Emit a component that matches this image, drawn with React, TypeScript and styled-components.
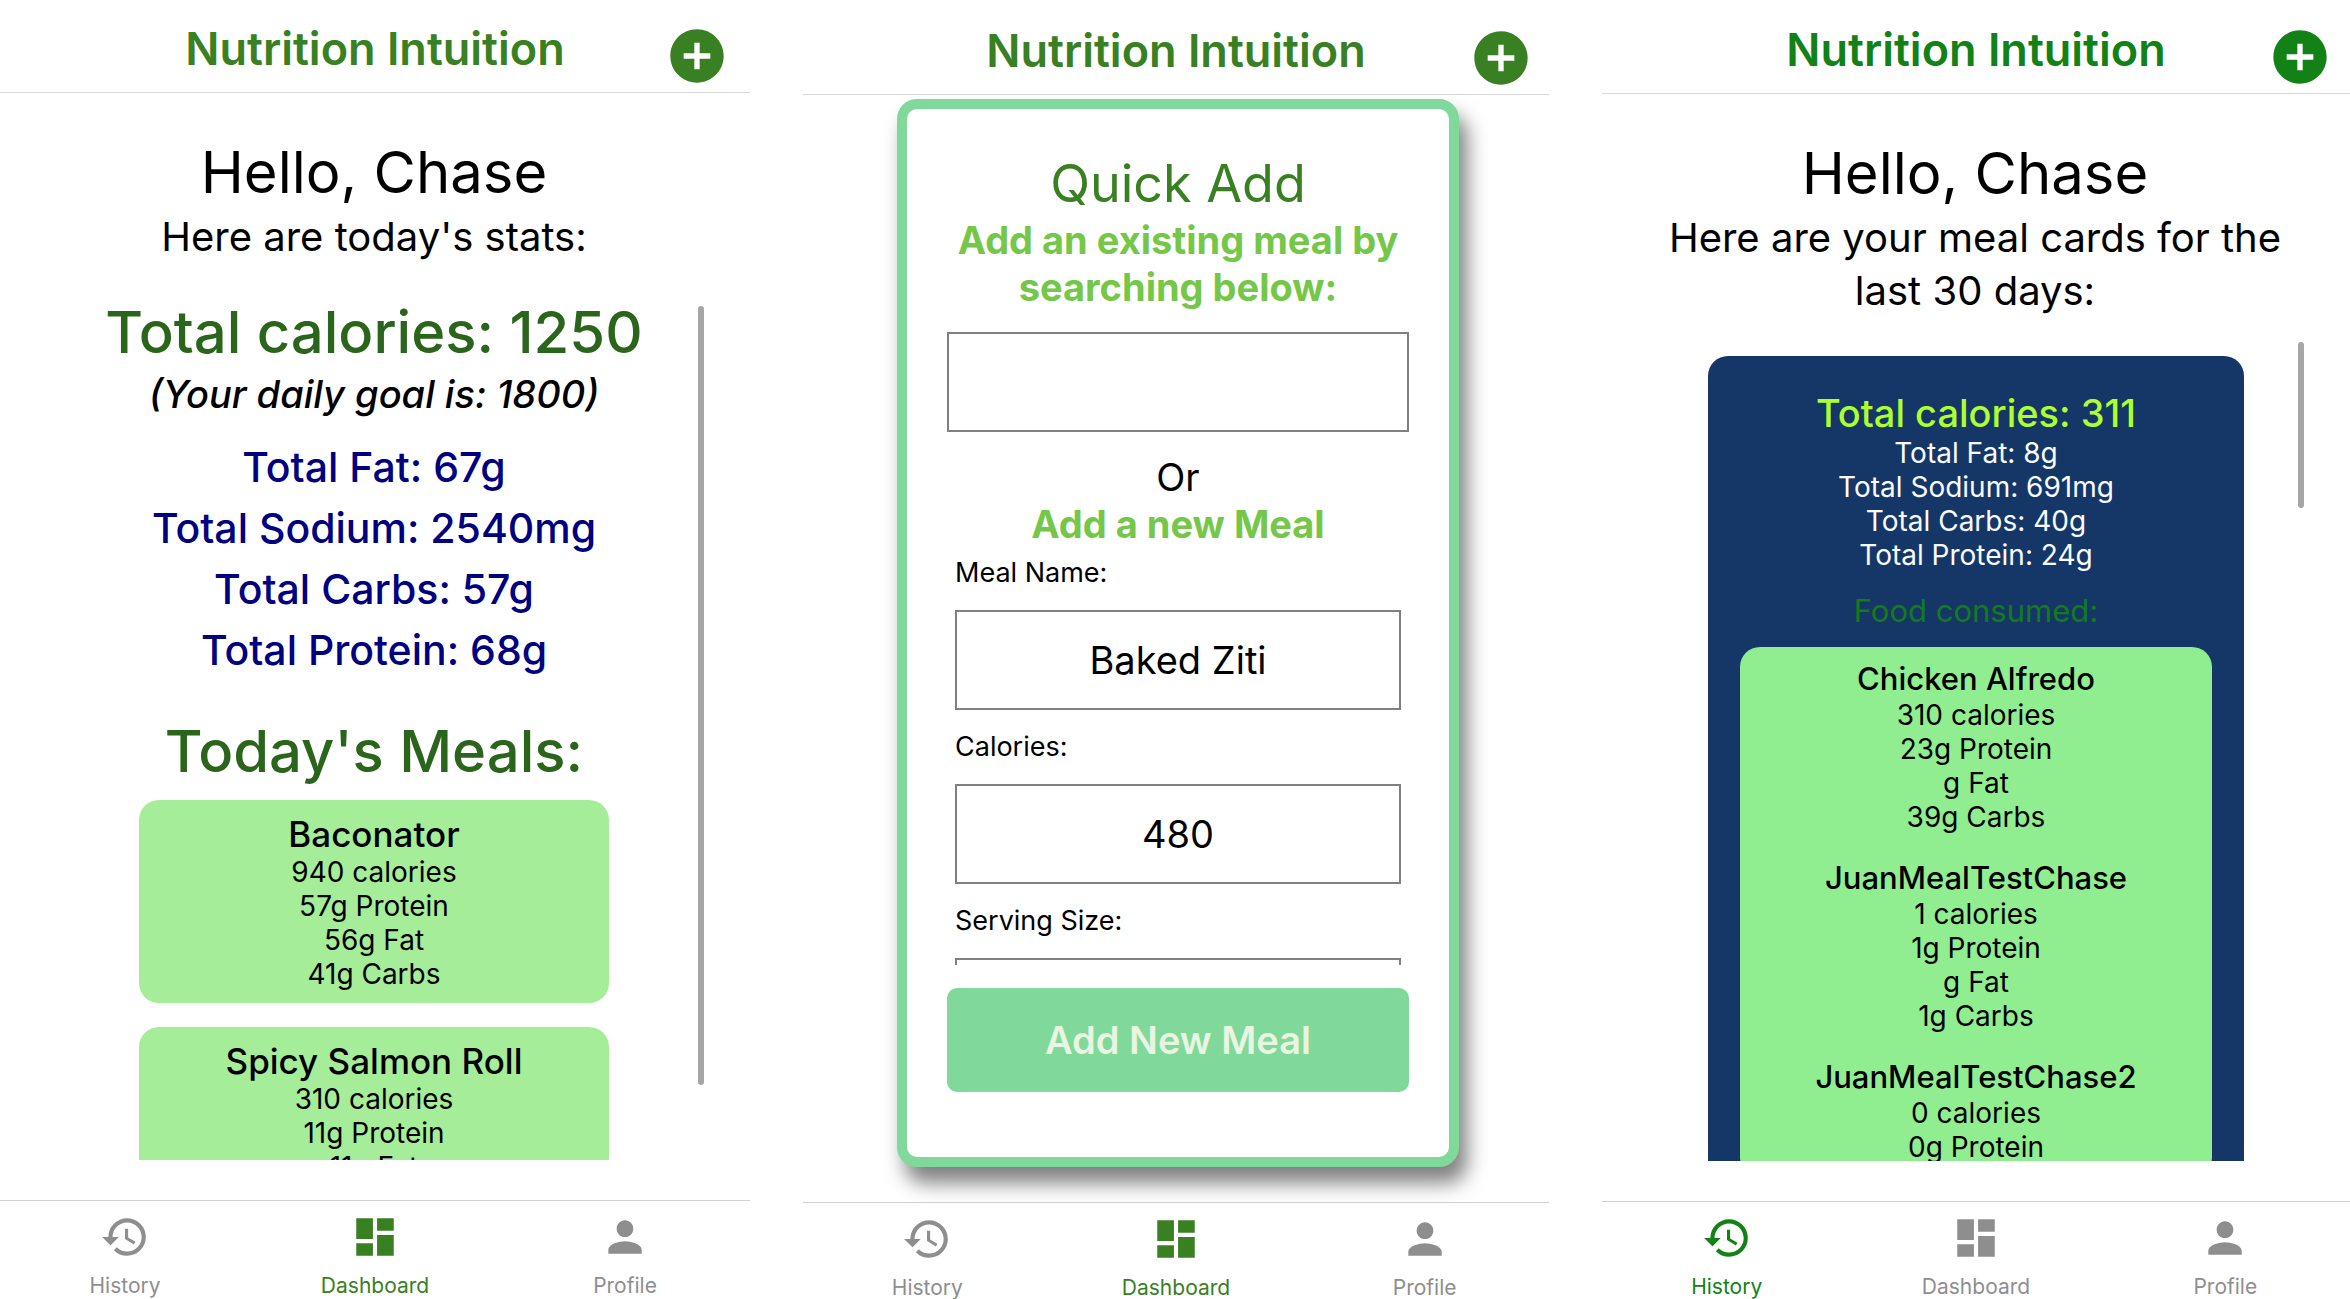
import React from 'react';
import styled, { createGlobalStyle } from 'styled-components';
import { MdAddCircle, MdDashboard, MdHistory, MdPerson } from 'react-icons/md';

const GlobalStyle = createGlobalStyle`
  *, *::before, *::after { box-sizing: border-box; }
  body {
    margin: 0;
    background: #fff;
    color: #000;
    font-family: Inter, "Liberation Sans", sans-serif;
  }
  h1, h2, h3, p, ul { margin: 0; padding: 0; font-weight: 400; }
  ul { list-style: none; }
`;

const Page = styled.div`
  display: grid;
  grid-template-columns: 750fr 746fr 748fr;
  grid-template-rows: minmax(0, 1fr);
  column-gap: 53px;
  height: 100vh;
  padding-bottom: 4px;
`;

const Screen = styled.section<{ $shift: number; $accent: string }>`
  display: flex;
  flex-direction: column;
  min-width: 0;
  min-height: 0;
  padding-top: ${(p) => p.$shift}px;
  --accent: ${(p) => p.$accent};
`;

const Header = styled.header<{ $edge: number }>`
  flex: none;
  display: grid;
  grid-template-columns: 1fr auto 1fr;
  align-items: start;
  height: 93px;
  padding-top: 24px;
  border-bottom: 1px solid #d8d8d8;

  h1 {
    grid-column: 2;
    font-size: 45px;
    line-height: 49px;
    font-weight: 600;
    color: var(--accent);
  }

  button {
    justify-self: end;
    margin-right: ${(p) => p.$edge}px;
  }
`;

const AddButton = styled.button`
  display: flex;
  padding: 0;
  border: 0;
  background: none;
  color: var(--accent);
  font-size: 64px;
  cursor: pointer;
`;

const Body = styled.main`
  flex: 1;
  display: flex;
  flex-direction: column;
  min-height: 0;
  padding: 41px 46px 40px 44px;
  text-align: center;
`;

const Greeting = styled.h2`
  font-size: 58px;
  line-height: 76px;
`;

const Intro = styled.p`
  font-size: 40px;
  line-height: 53px;
`;

const ScrollFrame = styled.div<{ $gap: number }>`
  position: relative;
  flex: 1;
  min-height: 0;
  margin-top: ${(p) => p.$gap}px;
`;

const Scroller = styled.div`
  height: 100%;
  overflow-y: auto;
  scrollbar-width: none;
`;

const Thumb = styled.div<{ $percent: number }>`
  position: absolute;
  top: 12px;
  right: 0;
  width: 6px;
  height: ${(p) => p.$percent}%;
  border-radius: 3px;
  background: #a6a6a6;
`;

const SectionTitle = styled.h3`
  font-size: 58px;
  line-height: 76px;
  font-weight: 500;
  color: #2b651b;
`;

const Goal = styled.p`
  font-size: 38px;
  line-height: 48px;
  font-weight: 500;
  font-style: italic;
`;

const Totals = styled.ul`
  margin: 19px 0 32px;
  font-size: 41px;
  line-height: 61px;
  font-weight: 500;
  color: #000080;
`;

const MealList = styled.div`
  display: flex;
  flex-direction: column;
  gap: 24px;
  margin: 11px 95px 0;
`;

const MealCard = styled.article`
  padding: 13px 16px 12px;
  border-radius: 20px;
  background: #a6ed9a;
`;

const MealName = styled.h3<{ $small?: boolean }>`
  font-size: ${(p) => (p.$small ? 31 : 35)}px;
  line-height: ${(p) => (p.$small ? 38 : 42)}px;
  font-weight: 500;
`;

const Facts = styled.ul`
  font-size: 28px;
  line-height: 34px;
`;

const DayCard = styled.article`
  margin: 26px 60px 0 62px;
  padding: 34px 32px;
  border-radius: 20px;
  background: #153768;
  color: #f8fbff;
`;

const DayTotal = styled.h3`
  font-size: 38px;
  line-height: 46px;
  font-weight: 500;
  color: #adff2f;
`;

const FoodTitle = styled.h3`
  margin: 20px 0 17px;
  font-size: 31px;
  line-height: 38px;
  color: #147a1c;
`;

const FoodCard = styled.div`
  display: flex;
  flex-direction: column;
  gap: 25px;
  padding: 13px 16px;
  border-radius: 20px;
  background: #90ee90;
  color: #000;
`;

const Modal = styled.form`
  flex: 1;
  display: flex;
  flex-direction: column;
  min-height: 0;
  margin: 4px 90px 35px 94px;
  padding: 42px 40px 65px;
  border: 10px solid #81d89b;
  border-radius: 20px;
  background: #fff;
  box-shadow: 8px 16px 20px rgba(0, 0, 0, 0.5);
  text-align: center;
`;

const ModalTitle = styled.h2`
  font-size: 52px;
  line-height: 66px;
  color: var(--accent);
`;

const ModalText = styled.p<{ $strong?: boolean }>`
  font-size: 38px;
  line-height: 47px;
  font-weight: ${(p) => (p.$strong ? 700 : 400)};
  color: ${(p) => (p.$strong ? '#74c748' : '#000')};
`;

const TextInput = styled.input`
  flex: none;
  width: 100%;
  height: 100px;
  border: 2px solid #808080;
  border-radius: 0;
  background: #fff;
  color: #000;
  font: 400 38px/46px Inter, "Liberation Sans", sans-serif;
  text-align: center;
`;

const SearchInput = styled(TextInput)`
  margin: 21px 0 22px;
`;

const Fields = styled.div`
  flex: 1;
  display: flex;
  flex-direction: column;
  gap: 20px;
  min-height: 0;
  margin: 8px 8px 23px;
  overflow-y: auto;
  scrollbar-width: none;
`;

const Field = styled.label`
  flex: none;
  display: flex;
  flex-direction: column;
  gap: 20px;
  font-size: 27px;
  line-height: 34px;
  text-align: left;
`;

const SubmitButton = styled.button`
  flex: none;
  height: 104px;
  border: 0;
  border-radius: 10px;
  background: #81d89b;
  color: #e8f5e0;
  font: 600 38px/46px Inter, "Liberation Sans", sans-serif;
  cursor: pointer;
`;

const TabBar = styled.nav<{ $shift: number }>`
  flex: none;
  display: grid;
  grid-template-columns: repeat(3, 1fr);
  height: ${(p) => 95 - p.$shift}px;
  padding-top: 11px;
  border-top: 1px solid #d0d0d0;
`;

const Tab = styled.a<{ $active: boolean }>`
  display: flex;
  flex-direction: column;
  align-items: center;
  gap: 13px;
  color: ${(p) => (p.$active ? 'var(--accent)' : '#8e8e8f')};
  font-size: 21px;
  line-height: 22px;
  text-decoration: none;

  svg { flex: none; font-size: 50px; }
`;

const tabs = [
  { name: 'History', Icon: MdHistory },
  { name: 'Dashboard', Icon: MdDashboard },
  { name: 'Profile', Icon: MdPerson },
];

type PhoneProps = {
  shift: number;
  edge: number;
  accent: string;
  active: string;
  children: React.ReactNode;
};

function Phone({ shift, edge, accent, active, children }: PhoneProps) {
  return (
    <Screen $shift={shift} $accent={accent}>
      <Header $edge={edge}>
        <h1>Nutrition Intuition</h1>
        <AddButton type="button" aria-label="Add meal">
          <MdAddCircle />
        </AddButton>
      </Header>
      {children}
      <TabBar $shift={shift}>
        {tabs.map(({ name, Icon }) => (
          <Tab key={name} href={`#${name.toLowerCase()}`} $active={name === active}>
            <Icon />
            <span>{name}</span>
          </Tab>
        ))}
      </TabBar>
    </Screen>
  );
}

type Meal = { name: string; facts: string[] };

const todaysTotals = ['Total Fat: 67g', 'Total Sodium: 2540mg', 'Total Carbs: 57g', 'Total Protein: 68g'];

const todaysMeals: Meal[] = [
  { name: 'Baconator', facts: ['940 calories', '57g Protein', '56g Fat', '41g Carbs'] },
  { name: 'Spicy Salmon Roll', facts: ['310 calories', '11g Protein', '11g Fat'] },
];

const dayTotals = ['Total Fat: 8g', 'Total Sodium: 691mg', 'Total Carbs: 40g', 'Total Protein: 24g'];

const dayMeals: Meal[] = [
  { name: 'Chicken Alfredo', facts: ['310 calories', '23g Protein', 'g Fat', '39g Carbs'] },
  { name: 'JuanMealTestChase', facts: ['1 calories', '1g Protein', 'g Fat', '1g Carbs'] },
  { name: 'JuanMealTestChase2', facts: ['0 calories', '0g Protein'] },
];

function Lines({ items }: { items: string[] }) {
  return <>{items.map((item) => <li key={item}>{item}</li>)}</>;
}

function Dashboard() {
  return (
    <Body>
      <Greeting>Hello, Chase</Greeting>
      <Intro>Here are today's stats:</Intro>
      <ScrollFrame $gap={31}>
        <Scroller>
          <SectionTitle>Total calories: 1250</SectionTitle>
          <Goal>(Your daily goal is: 1800)</Goal>
          <Totals><Lines items={todaysTotals} /></Totals>
          <SectionTitle>Today's Meals:</SectionTitle>
          <MealList>
            {todaysMeals.map((meal) => (
              <MealCard key={meal.name}>
                <MealName>{meal.name}</MealName>
                <Facts><Lines items={meal.facts} /></Facts>
              </MealCard>
            ))}
          </MealList>
        </Scroller>
        <Thumb $percent={90} />
      </ScrollFrame>
    </Body>
  );
}

function QuickAdd() {
  return (
    <Modal>
      <ModalTitle>Quick Add</ModalTitle>
      <ModalText as="label" htmlFor="meal-search" $strong>
        Add an existing meal by searching below:
      </ModalText>
      <SearchInput id="meal-search" type="text" />
      <ModalText>Or</ModalText>
      <ModalText $strong>Add a new Meal</ModalText>
      <Fields>
        <Field>
          Meal Name:
          <TextInput type="text" defaultValue="Baked Ziti" />
        </Field>
        <Field>
          Calories:
          <TextInput type="text" defaultValue="480" />
        </Field>
        <Field>
          Serving Size:
          <TextInput type="text" />
        </Field>
      </Fields>
      <SubmitButton type="button">Add New Meal</SubmitButton>
    </Modal>
  );
}

function History() {
  return (
    <Body>
      <Greeting>Hello, Chase</Greeting>
      <Intro>Here are your meal cards for the last 30 days:</Intro>
      <ScrollFrame $gap={13}>
        <Scroller>
          <DayCard>
            <DayTotal>Total calories: 311</DayTotal>
            <Facts><Lines items={dayTotals} /></Facts>
            <FoodTitle>Food consumed:</FoodTitle>
            <FoodCard>
              {dayMeals.map((meal) => (
                <div key={meal.name}>
                  <MealName $small>{meal.name}</MealName>
                  <Facts><Lines items={meal.facts} /></Facts>
                </div>
              ))}
            </FoodCard>
          </DayCard>
        </Scroller>
        <Thumb $percent={20} />
      </ScrollFrame>
    </Body>
  );
}

export default function App() {
  return (
    <>
      <GlobalStyle />
      <Page>
        <Phone shift={0} edge={21} accent="#388021" active="Dashboard">
          <Dashboard />
        </Phone>
        <Phone shift={2} edge={16} accent="#388021" active="Dashboard">
          <QuickAdd />
        </Phone>
        <Phone shift={1} edge={18} accent="#128216" active="History">
          <History />
        </Phone>
      </Page>
    </>
  );
}
